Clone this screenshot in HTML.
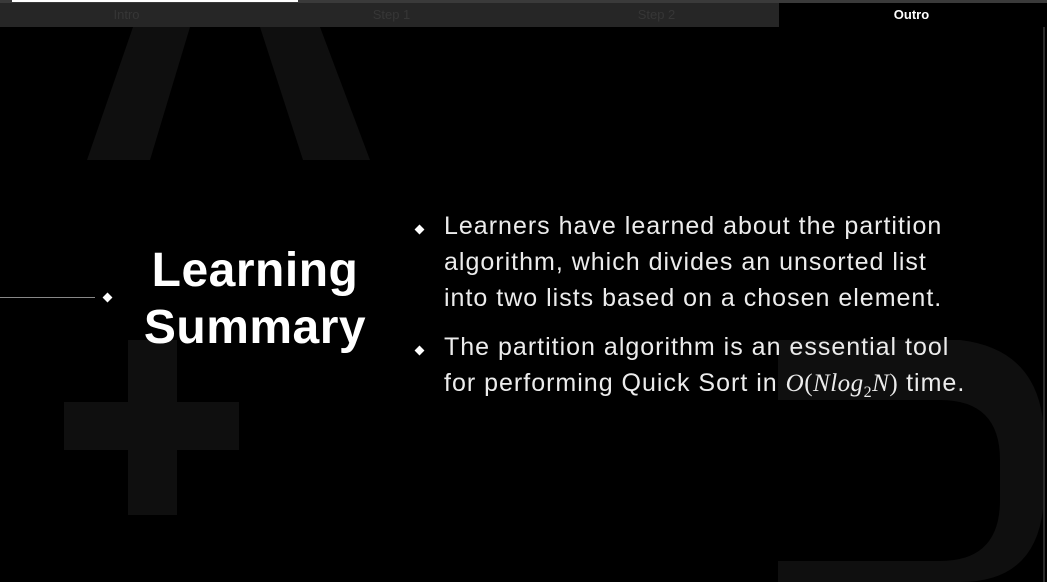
<!DOCTYPE html>
<html><head><meta charset="utf-8"><style>
*{margin:0;padding:0;box-sizing:border-box}
body{width:1047px;height:582px;background:#000;position:relative;overflow:hidden;font-family:"Liberation Sans","DejaVu Sans",sans-serif;color:#fff}
.abs{position:absolute}
.tab{position:absolute;top:3px;height:24px;font-size:13px;line-height:24px;text-align:center;color:#363636}
.l{position:absolute;left:444px;font-size:25px;white-space:nowrap;color:#ececec;letter-spacing:1px}
.b{position:absolute;left:416px;width:7px;height:7px;background:#fff;transform:rotate(45deg)}
.m{font-family:'Liberation Serif',serif;letter-spacing:0.5px}
</style></head><body>
<svg class="abs" style="left:0;top:0" width="1047" height="582">
<polygon points="133,27 190,27 150,160 87,160" fill="#0f0f0f"/>
<polygon points="260,27 320,27 370,160 303,160" fill="#0f0f0f"/>
<rect x="128" y="340" width="49" height="175" fill="#0f0f0f"/>
<rect x="64" y="402" width="175" height="48" fill="#0f0f0f"/>
<path d="M778,340 L960,340 Q1044,350 1044,440 L1044,490 Q1044,582 960,582 L778,582 Z M778,400 L778,561 L940,561 Q1000,561 1000,500 L1000,460 Q1000,400 940,400 Z" fill="#0f0f0f" fill-rule="evenodd"/>
<rect x="1043" y="27" width="2" height="555" fill="#2a2a2a"/>
</svg>
<div class="abs" style="left:0;top:0;width:1047px;height:3px;background:#3a3a3a"></div>
<div class="abs" style="left:12px;top:0;width:286px;height:2px;background:#fff"></div>
<div class="abs" style="left:0;top:3px;width:779px;height:24px;background:#262626"></div>
<div class="tab" style="left:0;width:253px">Intro</div>
<div class="tab" style="left:260px;width:263px">Step 1</div>
<div class="tab" style="left:525px;width:263px">Step 2</div>
<div class="tab" style="left:779px;width:265px;background:#000;color:#fff;font-weight:bold">Outro</div>
<div class="abs" style="left:0;top:297px;width:95px;height:1px;background:#888"></div>
<div class="abs" style="left:104px;top:294px;width:7px;height:7px;background:#fff;transform:rotate(45deg)"></div>
<div class="abs" style="left:120px;top:242px;width:270px;text-align:center;font-size:48px;font-weight:bold;line-height:57px;letter-spacing:0.5px">Learning<br>Summary</div>
<div class="b" style="top:226px"></div>
<div class="b" style="top:347px"></div>
<div class="l" style="top:212px">Learners have learned about the partition</div>
<div class="l" style="top:248px">algorithm, which divides an unsorted list</div>
<div class="l" style="top:284px">into two lists based on a chosen element.</div>
<div class="l" style="top:333px">The partition algorithm is an essential tool</div>
<div class="l" style="top:369px">for performing Quick Sort in <span class="m" style="font-style:italic">O</span><span class="m">(</span><span class="m" style="font-style:italic">Nlog</span><sub class="m" style="font-size:16px">2</sub><span class="m" style="font-style:italic">N</span><span class="m">)</span> time.</div>
</body></html>
